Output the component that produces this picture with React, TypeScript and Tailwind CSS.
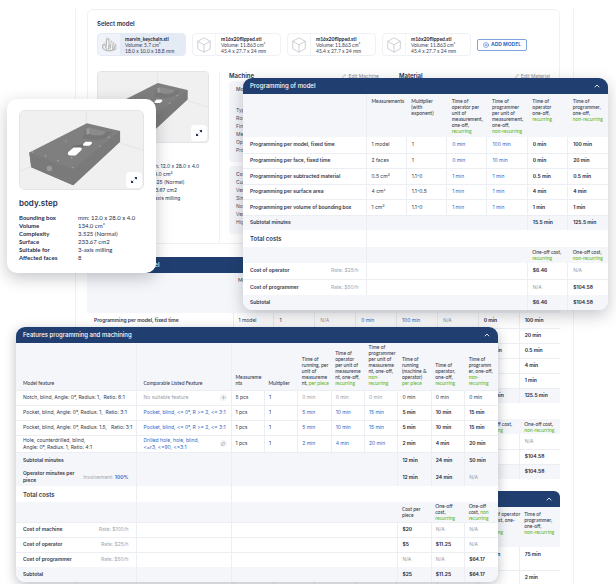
import type { ReactNode } from "react";
import { ChevronUp, CirclePlus, Pencil, Plus, RefreshCw } from "lucide-react";

/* ---------- drawings ---------- */

function PartDrawing() {
  return (
    <svg viewBox="0 0 126 80" className="block w-full" role="img" aria-label="3D view of body.step">
      <rect width="126" height="80" fill="#f0f0f1" />
      <path d="M68 0V13M0 62L11 57M103 33L126 40" stroke="#d9dadc" strokeWidth=".6" fill="none" />
      <path d="M68.5 12.5L102.5 20.5V31.5L54.5 76L11.5 57.5L9.5 42.5Z" fill="#7f7f7f" />
      <path d="M9.5 42.5L54 60L102.5 20.5V31.5L54.5 76L11.5 57.5Z" fill="#7a7a7a" />
      <path d="M68 17L94 22Q88 30 76 30L64 28Z" fill="#777" />
      <path d="M70 17L88 21Q87 25 80 25Q72 25 69 22Z" fill="#8b8b8b" />
      <path d="M68 18Q70 17 71 19V23Q69 25 68 23Z" fill="#9c9c9c" />
      <path d="M53 36L64 34L66 37L56 38Z" fill="#6e6e6e" />
      <path d="M49.5 42L55 37.5H62Q64 38 63 40L57 45.5H51Q48 45 49.5 42Z" fill="#fff" />
      <path d="M67 31.5H72Q75 32 73 34L71 35.5H65Q64 34.5 65 33.5Z" fill="#fff" />
      <circle cx="30" cy="59" r="2.8" fill="#9a9a9a" />
      <g fill="#adadad">
        <circle cx="26" cy="46" r=".8" />
        <circle cx="39" cy="51" r=".8" />
        <circle cx="13" cy="42" r=".7" />
        <circle cx="54" cy="58" r=".7" />
        <circle cx="53" cy="48" r=".8" />
        <circle cx="91" cy="27" r=".8" />
        <circle cx="82" cy="36" r=".7" />
        <circle cx="47" cy="31" r=".7" />
      </g>
    </svg>
  );
}

function ExpandIcon() {
  return (
    <svg viewBox="0 0 8 8" className="size-2" aria-hidden="true">
      <path d="M4.2 1H7V3.8ZM1 4.2V7H3.8Z" fill="#27365c" />
      <path d="M6.2 1.8L4.8 3.2M3.2 4.8L1.8 6.2" stroke="#27365c" strokeWidth=".9" />
    </svg>
  );
}

function CubeIcon() {
  return (
    <svg viewBox="0 0 16 16" className="size-4" fill="none" stroke="#b9bcc1" strokeWidth=".7" strokeLinejoin="round" aria-hidden="true">
      <path d="M8 .8L14.3 4.3V11.7L8 15.2L1.7 11.7V4.3ZM1.7 4.3L8 7.8L14.3 4.3M8 7.8V15.2" />
    </svg>
  );
}

function KeychainIcon() {
  return (
    <svg viewBox="0 0 17 17" className="size-[17px]" fill="none" strokeLinecap="round" aria-hidden="true">
      <path d="M1 11Q0 8 3 7L6 2L9 2L10 4L13 6Q17 8 16 12Q14 15.5 8.5 15.5Q3 15.5 1 11Z" fill="#e2e2e3" />
      <path d="M1.5 12Q1 9 3 8L5 13M6 2L5 11M7.5 3L8.5 6L7.5 13M10 5L9.5 12M12 7L11.5 13M14.5 9L13 13M2 13Q8 17 15 13" stroke="#929396" strokeWidth=".6" />
      <path d="M6.5 5V12M11 7L10.5 13M3.5 10L4 13M9 4V8" stroke="#fff" strokeWidth=".8" />
    </svg>
  );
}

/* ---------- shared pieces ---------- */

function Preview({ className }: { className: string }) {
  return (
    <div className={`relative overflow-hidden border border-[#e2e4e8] bg-[#f0f0f1] ${className}`}>
      <PartDrawing />
      <button type="button" aria-label="Expand preview" className="absolute right-px bottom-px grid size-4 place-items-center rounded bg-white">
        <ExpandIcon />
      </button>
    </div>
  );
}

function Banner({ title, label, className }: { title?: string; label?: string; className: string }) {
  return (
    <header className={`flex h-4 items-center justify-between bg-[#203f70] text-white ${className}`}>
      <h2 className="text-[6px] leading-4 font-medium">{title}</h2>
      <button type="button" aria-label={`Collapse ${label ?? title}`} className="grid size-2 place-items-center">
        <ChevronUp className="size-2" strokeWidth={2.5} />
      </button>
    </header>
  );
}

/** Column heading; the part after "|" is the green recurrence note. */
function Head({ text }: { text: string }) {
  const [main, note] = text.split("|");
  return (
    <span className="block font-['Lato','Liberation_Sans',sans-serif] text-[5px] leading-[6px] font-medium whitespace-pre text-[#363b4c]">
      {main}
      {note && <span className="text-[#68b82e]">{note}</span>}
    </span>
  );
}

/** Cell value: "~" marks an editable blue value, "-" a muted one, "*" a bold one. */
function Value({ text }: { text: string }) {
  if (text === "N/A") return <span className="text-[#9a9da6]">N/A</span>;
  if (text.startsWith("~")) return <span className="text-[#2f67c6]">{text.slice(1)}</span>;
  if (text.startsWith("-")) return <span className="text-[#9a9da6]">{text.slice(1)}</span>;
  if (text.startsWith("*")) return <span className="font-semibold text-[#23273a]">{text.slice(1)}</span>;
  return <>{text}</>;
}

const line = "border-[#eceef3]";

function ValueCells({ values, pad }: { values: string[]; pad: string }) {
  return (
    <>
      {values.map((v, i) => (
        <td key={i} className={`border-l ${line} ${pad} whitespace-nowrap`}>
          <Value text={v} />
        </td>
      ))}
    </>
  );
}

function Label({ children, rate }: { children: ReactNode; rate?: ReactNode }) {
  return (
    <th scope="row" className="px-[7px] text-left font-semibold">
      <span className="flex items-center justify-between">
        <span>{children}</span>
        {rate && <span className="font-normal text-[#a3a6ae]">{rate}</span>}
      </span>
    </th>
  );
}

/* ---------- programming table ---------- */

const progHeads = [
  "Measurements",
  "Multiplier\n(with\nexponent)",
  "Time of\noperator per\nunit of\nmeasurement,\none-off,\n|recurring",
  "Time of\nprogrammer\nper unit of\nmeasurement,\none-off,\n|non-recurring",
  "Time of\noperator\none-off,\n|recurring",
  "Time of\nprogrammer,\none-off,\n|non-recurring",
];

const progRows: [string, string[]][] = [
  ["Programming per model, fixed time", ["1 model", "1", "~0 min", "~100 min", "*0 min", "*100 min"]],
  ["Programming per face, fixed time", ["2 faces", "1", "~0 min", "~10 min", "*0 min", "*20 min"]],
  ["Programming per subtracted material", ["0.5 cm³", "1.1^0", "~1 min", "~1 min", "*0.5 min", "*0.5 min"]],
  ["Programming per surface area", ["4 cm²", "1.1^0.5", "~1 min", "~1 min", "*4 min", "*4 min"]],
  ["Programming per volume of bounding box", ["1 cm³", "1.1^0", "~1 min", "~1 min", "*1 min", "*1 min"]],
];

function ProgrammingPanel() {
  return (
    <section className="absolute top-[78px] right-2 left-[243px] overflow-hidden rounded-[9px] bg-white shadow-[0_5px_16px_rgba(30,35,50,0.26)]">
      <Banner title="Programming of model" className="px-[7px]" />
      <table className="w-full table-fixed border-collapse text-[5px] leading-[7px] text-[#33384a]">
        <colgroup>
          <col className="w-[123px]" />
          <col span={6} />
        </colgroup>
        <thead className="bg-[#f4f6fa]">
          <tr className="h-[43px] align-top">
            <td />
            {progHeads.map((h, i) => (
              <th key={h} scope="col" className={`pt-1 pl-[5px] text-left ${i === 0 ? `border-l ${line}` : ""}`}>
                <Head text={h} />
              </th>
            ))}
          </tr>
        </thead>
        <tbody>
          {progRows.map(([name, values]) => (
            <tr key={name} className={`border-b ${line} odd:h-4 even:h-[15px]`}>
              <Label>{name}</Label>
              <ValueCells values={values} pad="pl-[5px]" />
            </tr>
          ))}
          <tr className="h-[15px] bg-[#f4f6fa]">
            <Label>Subtotal minutes</Label>
            <td colSpan={4} className={`border-l ${line}`} />
            <ValueCells values={["*15.5 min", "*125.5 min"]} pad="pl-[5px]" />
          </tr>
          <tr className="h-[17px] text-[6px]">
            <Label>Total costs</Label>
            <td colSpan={6} className={`border-l ${line}`} />
          </tr>
          <tr className="h-4 bg-[#f4f6fa]">
            <td />
            <td colSpan={4} className={`border-l ${line}`} />
            <td className="pl-[5px]"><Head text={"One-off cost,\n|recurring"} /></td>
            <td className="pl-[5px]"><Head text={"One-off cost,\n|non-recurring"} /></td>
          </tr>
          <tr className={`h-4 border-b ${line}`}>
            <Label rate="Rate: $25/h">Cost of operator</Label>
            <td colSpan={4} className={`border-l ${line}`} />
            <ValueCells values={["*$6.46", "N/A"]} pad="pl-[5px]" />
          </tr>
          <tr className="h-4">
            <Label rate="Rate: $50/h">Cost of programmer</Label>
            <td colSpan={4} className={`border-l ${line}`} />
            <ValueCells values={["N/A", "*$104.58"]} pad="pl-[5px]" />
          </tr>
          <tr className="h-[15px] bg-[#f4f6fa]">
            <Label>Subtotal</Label>
            <td colSpan={4} />
            <ValueCells values={["*$6.46", "*$104.58"]} pad="pl-[5px]" />
          </tr>
        </tbody>
      </table>
    </section>
  );
}

/* ---------- features table ---------- */

const featureHeads = [
  "Measureme\nnts",
  "Multiplier",
  "Time of\nrunning, per\nunit of\nmeasureme\nnt, |per piece",
  "Time of\noperator\nper unit of\nmeasureme\nnt, one-off,\n|recurring",
  "Time of\nprogrammer\nper unit of\nmeasureme\nnt, one-off,\n|non-\nrecurring",
  "Time of\nrunning\n(machine &\noperator)\n|per piece",
  "Time of\noperator,\none-off,\n|recurring",
  "Time of\nprogramm\ner, one-off,\n|non-\nrecurring",
];

type Feature = { name: string; match: string; icon?: "add" | "swap"; values: string[] };

const features: Feature[] = [
  {
    name: "Notch, blind, Angle: 0°, Radius: 1,  Ratio: 6:1",
    match: "-No suitable feature",
    icon: "add",
    values: ["5 pcs", "1", "-0 min", "-0 min", "-0 min", "0 min", "0 min", "0 min"],
  },
  {
    name: "Pocket, blind, Angle: 0°, Radius: 1,  Ratio: 3:1",
    match: "~Pocket, blind, <= 0°, R >= 2, <= 3:1",
    values: ["1 pcs", "1", "~5 min", "~10 min", "~15 min", "*5 min", "*10 min", "*15 min"],
  },
  {
    name: "Pocket, blind, Angle: 0°, Radius: 1.5,   Ratio: 3:1",
    match: "~Pocket, blind, <= 0°, R >= 2, <= 3:1",
    values: ["1 pcs", "1", "~5 min", "~10 min", "~15 min", "*5 min", "*10 min", "*15 min"],
  },
  {
    name: "Hole, counterdrilled, blind,\nAngle: 0°, Radius: 1, Ratio: 4:1",
    match: "~Drilled hole, hole, blind,\n<=r3, <=90, <=3:1",
    icon: "swap",
    values: ["1 pcs", "1", "~2 min", "~4 min", "~20 min", "*2 min", "*4 min", "*20 min"],
  },
];

function SummaryRow({ label, rate, values, className }: { label: ReactNode; rate?: ReactNode; values: string[]; className: string }) {
  return (
    <tr className={className}>
      <Label rate={rate}>{label}</Label>
      <td className={`border-l ${line}`} />
      <td colSpan={5} className={`border-l ${line}`} />
      <ValueCells values={values} pad="pl-1" />
    </tr>
  );
}

function FeaturesPanel() {
  return (
    <section className="absolute top-[327px] right-[118px] left-4 overflow-hidden rounded-[9px] bg-white shadow-[0_3px_12px_rgba(30,35,50,0.3)]">
      <Banner title="Features programming and machining" className="px-[7px]" />
      <table className="w-full table-fixed border-collapse text-[5px] leading-[7px] text-[#33384a]">
        <colgroup>
          <col className="w-[120px]" />
          <col className="w-[95px]" />
          <col span={8} />
        </colgroup>
        <thead className="bg-[#f4f6fa]">
          <tr className={`h-[47px] border-b align-bottom ${line}`}>
            <th scope="col" className="pb-1 pl-[7px] text-left"><Head text="Model feature" /></th>
            <th scope="col" className={`border-l ${line} pb-1 pl-[7px] text-left`}><Head text="Comparable Listed Feature" /></th>
            {featureHeads.map((h, i) => (
              <th key={h} scope="col" className={`pb-1 pl-1 text-left ${i === 0 ? `border-l ${line}` : ""}`}>
                <Head text={h} />
              </th>
            ))}
          </tr>
        </thead>
        <tbody>
          {features.map((f) => (
            <tr key={f.name} className={`h-[15px] border-b last:h-[17px] ${line}`}>
              <td className="pl-[7px] whitespace-pre">{f.name}</td>
              <td className={`border-l ${line} pr-1 pl-[7px]`}>
                <span className="flex items-center justify-between whitespace-pre">
                  <span><Value text={f.match} /></span>
                  {f.icon && (
                    <button type="button" aria-label={f.icon === "add" ? "Add feature" : "Change feature"} className="grid size-[7px] place-items-center rounded-full bg-[#f1f2f4] text-[#8d9098]">
                      {f.icon === "add" ? <Plus className="size-[5px]" /> : <RefreshCw className="size-1" />}
                    </button>
                  )}
                </span>
              </td>
              <ValueCells values={f.values} pad="pl-1" />
            </tr>
          ))}
        </tbody>
        <tbody>
          <SummaryRow label="Subtotal minutes" values={["*12 min", "*24 min", "*50 min"]} className="h-4 bg-[#f4f6fa]" />
          <SummaryRow
            label={<>Operator minutes per<br />piece</>}
            rate={<>Involvement: <a href="#involvement" className="font-semibold text-[#2f67c6]">100%</a></>}
            values={["*12 min", "*24 min", "N/A"]}
            className="h-[18px] bg-[#f4f6fa]"
          />
          <tr className="h-4 text-[6px]">
            <Label>Total costs</Label>
            <td className={`border-l ${line}`} />
            <td colSpan={8} className={`border-l ${line}`} />
          </tr>
          <tr className={`h-5 border-b bg-[#f4f6fa] ${line}`}>
            <td />
            <td className={`border-l ${line}`} />
            <td colSpan={5} className={`border-l ${line}`} />
            <td className="pl-1"><Head text={"Cost per\npiece"} /></td>
            <td className="pl-1"><Head text={"One-off\ncost,\n|recurring"} /></td>
            <td className="pl-1"><Head text={"One-off\ncost, |non\nrecurring"} /></td>
          </tr>
          <SummaryRow label="Cost of machine" rate="Rate: $100/h" values={["*$20", "N/A", "N/A"]} className={`h-[15px] border-b ${line}`} />
          <SummaryRow label="Cost of operator" rate="Rate: $25/h" values={["*$5", "*$11.25", "N/A"]} className={`h-[15px] border-b ${line}`} />
          <SummaryRow label="Cost of programmer" rate="Rate: $50/h" values={["N/A", "N/A", "*$64.17"]} className="h-[15px]" />
          <SummaryRow label="Subtotal" values={["*$25", "*$11.25", "*$64.17"]} className="h-[15px] bg-[#f4f6fa]" />
        </tbody>
      </table>
    </section>
  );
}

/* ---------- model card ---------- */

const facts = [
  ["Bounding box", "mm: 12.0 x 28.0 x 4.0"],
  ["Volume", "134.0 cm³"],
  ["Complexity", "3.525 (Normal)"],
  ["Surface", "233.67 cm2"],
  ["Suitable for", "3-axis milling"],
  ["Affected faces", "8"],
];

function ModelCard() {
  return (
    <section className="absolute top-[99px] left-[7px] w-[149px] rounded-[10px] bg-white px-3 pt-[11px] pb-[11px] text-[#27304f] shadow-[0_5px_16px_rgba(30,35,50,0.26)]">
      <Preview className="rounded-md" />
      <h2 className="mt-2 text-[8px] leading-[10px] font-semibold">body.step</h2>
      <dl className="mt-[6px] grid grid-cols-[59px_1fr] font-['Lato','Liberation_Sans',sans-serif] text-[6px] leading-[8px]">
        {facts.map(([k, v]) => (
          <div key={k} className="contents">
            <dt className="font-bold">{k}</dt>
            <dd className="whitespace-nowrap">{v}</dd>
          </div>
        ))}
      </dl>
    </section>
  );
}

/* ---------- page behind ---------- */

function ModelButton({ name, volume, size, selected }: { name: string; volume: string; size: string; selected?: boolean }) {
  return (
    <button type="button" className={`flex h-[23px] w-[89px] items-stretch overflow-hidden rounded border text-left ${selected ? "border-[#e4eaf4] bg-[#f0f3f9]" : "border-[#f0f1f4] bg-white"}`}>
      <span className="grid w-[22px] place-items-center">{selected ? <KeychainIcon /> : <CubeIcon />}</span>
      <span className={`flex flex-1 flex-col justify-center pl-[5px] font-['Lato','Liberation_Sans',sans-serif] text-[5px] leading-[6px] whitespace-nowrap text-[#3c4152] ${selected ? "bg-[#e4ebf5]" : "border-l border-[#f4f5f7]"}`}>
        <b className="text-[#23273a]">{name}</b>
        <span>{volume}</span>
        <span>{size}</span>
      </span>
    </button>
  );
}

function Spec({ title, items, extra }: { title: string; items: string[]; extra: string[] }) {
  return (
    <section className="flex flex-col text-[5px] leading-2 text-[#4a4f60]">
      <header className="flex h-[10px] items-center justify-between">
        <h3 className="text-[6px] font-semibold text-[#27304f]">{title}</h3>
        <a href={`#${title}`} className="flex items-center gap-[2px] text-[#8a8e99]">
          <Pencil className="size-1" />
          Edit {title}
        </a>
      </header>
      <div className="h-[81px] rounded bg-[#f5f6fa] px-[7px] pt-1">
        <p className="mb-[13px] font-medium">{items[0]}</p>
        {items.slice(1).map((s) => (
          <p key={s}>{s}</p>
        ))}
      </div>
      <div className="mt-1 h-[68px] rounded bg-[#f5f6fa] px-[7px] pt-1">
        {extra.map((s) => (
          <p key={s} className="first:font-medium">{s}</p>
        ))}
      </div>
    </section>
  );
}

const backCols = (
  <colgroup>
    <col className="w-[146px]" />
    <col span={8} />
  </colgroup>
);

const blanks = ["", "", "", "", "", ""];

const backRows: [string, string[]][] = [
  ["Programming per model, fixed time", ["1 model", "1", "N/A", "~0 min", "~100 min", "N/A", "*0 min", "*100 min"]],
  ["", [...blanks, "", "*20 min"]],
  ["", [...blanks, "*0.5 min", "*0.5 min"]],
  ["", [...blanks, "", "*4 min"]],
  ["", [...blanks, "", "*1 min"]],
];

function BackRow({ values, className }: { values: string[]; className: string }) {
  return (
    <tr className={className}>
      <td />
      <ValueCells values={[...blanks, ...values]} pad="pl-[5px]" />
    </tr>
  );
}

function BackTables() {
  return (
    <>
      <section className="mt-[13px]">
        <Banner title="Programming of model" className="px-[7px]" />
        <table className="w-full table-fixed border-collapse text-[5px] leading-[7px] text-[#33384a]">
          {backCols}
          <thead className="bg-[#f4f6fa]">
            <tr className="h-10 align-top">
              <td />
              <th scope="col" colSpan={8} className="pt-1 pl-[5px] text-left"><Head text="Me" /></th>
            </tr>
          </thead>
          <tbody>
            {backRows.map(([name, values], i) => (
              <tr key={i} className={`h-[15px] border-b ${line}`}>
                <Label>{name}</Label>
                <ValueCells values={values} pad="pl-[5px]" />
              </tr>
            ))}
            <BackRow values={["*15.5 min", "*125.5 min"]} className="h-[15px] bg-[#f4f6fa]" />
            <tr className="h-4">
              <td colSpan={9} />
            </tr>
            <tr className="h-[15px] bg-[#f4f6fa]">
              <td colSpan={7} />
              <td className="pl-[5px]"><Head text={"One-off cost,\n|recurring"} /></td>
              <td className="pl-[5px]"><Head text={"One-off cost,\n|non-recurring"} /></td>
            </tr>
            <BackRow values={["", "N/A"]} className={`h-[15px] border-b ${line}`} />
            <BackRow values={["", "*$104.58"]} className={`h-[15px] border-b ${line}`} />
            <BackRow values={["", "*$104.58"]} className="h-[15px] bg-[#f4f6fa]" />
          </tbody>
        </table>
      </section>
      <section className="mt-3 overflow-hidden rounded-t-md">
        <Banner label="Features programming and machining" className="px-[7px]" />
        <table className="w-full table-fixed border-collapse text-[5px] leading-[7px] text-[#33384a]">
          {backCols}
          <thead className="bg-[#f4f6fa]">
            <tr className="h-10 align-top">
              <td colSpan={7} />
              <th scope="col" className="pt-1 pl-[5px] text-left"><Head text={"Time of operator\nand post, one-\noff,\n|recurring"} /></th>
              <th scope="col" className="pt-1 pl-[5px] text-left"><Head text={"Time of\nprogrammer,\none-off,\n|non-recurring"} /></th>
            </tr>
          </thead>
          <tbody>
            <tr className={`h-[23px] border-b ${line}`}>
              <td colSpan={7} />
              <ValueCells values={["*24 min", "*75 min"]} pad="pb-2 pl-[5px]" />
            </tr>
            <BackRow values={["", "*2 min"]} className="h-[15px]" />
          </tbody>
        </table>
      </section>
    </>
  );
}

export default function App() {
  return (
    <div className="relative h-screen overflow-hidden bg-white font-['Inter','Liberation_Sans',sans-serif]">
      <main className="mt-[9px] mr-[42px] ml-[75px] border-x border-[#f0f1f4] pr-[13px] pl-[11px]">
        <section className="rounded-md border border-[#f0f1f4] px-[9px] pt-[9px] text-[#27304f]">
          <h1 className="text-[6px] leading-[10px] font-semibold">Select model</h1>
          <div className="mt-1 flex items-center gap-[6px]">
            <ModelButton name="marvin_keychain.stl" volume="Volume: 5.7 cm³" size="18.0 x 10.0 x 18.8 mm" selected />
            <ModelButton name="m16x20flipped.stl" volume="Volume: 11.863 cm³" size="45.4 x 27.7 x 24 mm" />
            <ModelButton name="m16x20flipped.stl" volume="Volume: 11.863 cm³" size="45.4 x 27.7 x 24 mm" />
            <ModelButton name="m16x20flipped.stl" volume="Volume: 11.863 cm³" size="45.4 x 27.7 x 24 mm" />
            <button type="button" className="flex h-3 w-[50px] items-center justify-center gap-[2px] rounded-[2px] border border-[#7da4dd] text-[5px] font-bold whitespace-nowrap text-[#2f6bc6]">
              <CirclePlus className="size-[6px]" />
              ADD MODEL
            </button>
          </div>
          <div className="mt-[15px] grid h-[172px] grid-cols-[112px_160px_1fr] gap-x-[10px]">
            <div>
              <Preview className="rounded" />
              <div className="mt-[19px] pl-[52px] text-[5px] leading-[8px]">
                {facts.slice(0, 5).map(([k, v]) => (
                  <p key={k} className="whitespace-nowrap">{v}</p>
                ))}
              </div>
            </div>
            <div className="border-l border-[#f0f1f4] pl-[9px]">
              <Spec
                title="Machine"
                items={["Mo", "Typ", "Rou", "Fin", "Me", "Op", "Pro"]}
                extra={["Co", "Curr", "Ver", "Sim", "No", "Ver", "Hig"]}
              />
            </div>
            <div className="pl-[10px]">
              <Spec title="Material" items={[]} extra={[]} />
            </div>
          </div>
        </section>
        <BackTables />
      </main>
      <ModelCard />
      <ProgrammingPanel />
      <FeaturesPanel />
    </div>
  );
}
